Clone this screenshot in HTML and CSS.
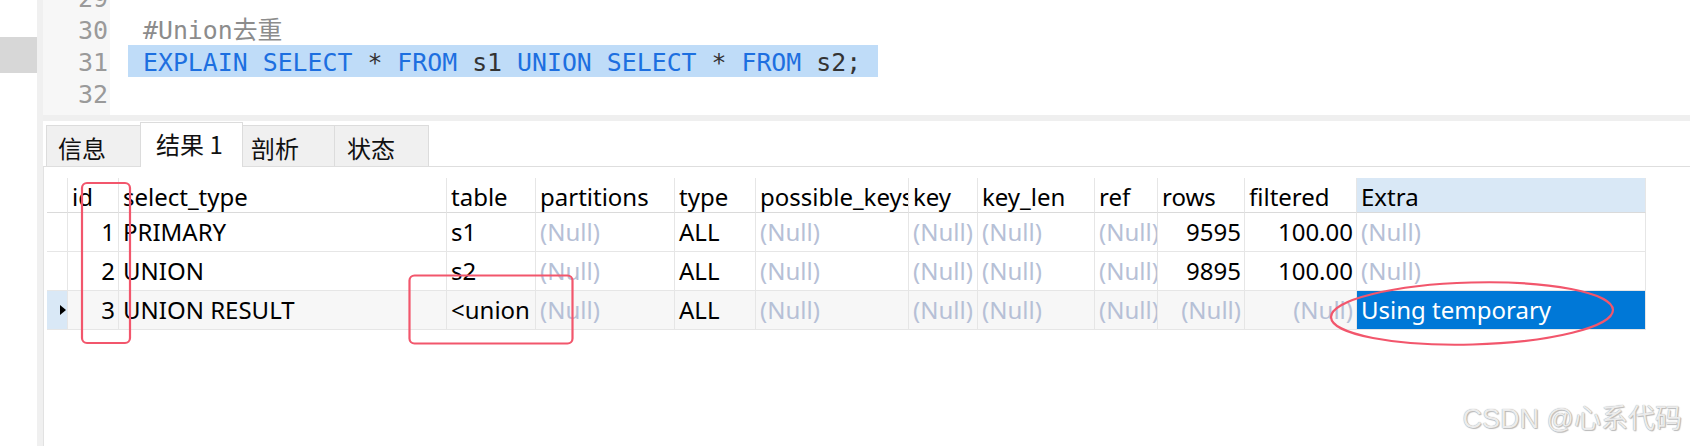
FILE: index.html
```html
<!DOCTYPE html>
<html lang="zh">
<head>
<meta charset="utf-8">
<title>EXPLAIN UNION</title>
<link rel="stylesheet" href="styles.css">
</head>
<body>
<div class="app">
  <div class="sidebar"><div class="side-item"></div></div>
  <div class="strip"></div>
  <div class="main">
    <div class="editor">
      <div class="editor-inner">
        <div class="gutter">
          <div class="ln">29</div>
          <div class="ln">30</div>
          <div class="ln">31</div>
          <div class="ln">32</div>
        </div>
        <div class="code">
          <div class="line"></div>
          <div class="line"><span class="cm">#Union去重</span></div>
          <div class="line hl"><span class="kw">EXPLAIN</span> <span class="kw">SELECT</span> <span class="op">*</span> <span class="kw">FROM</span> <span class="id">s1</span> <span class="kw">UNION</span> <span class="kw">SELECT</span> <span class="op">*</span> <span class="kw">FROM</span> <span class="id">s2;</span></div>
          <div class="line"></div>
        </div>
      </div>
    </div>
    <div class="band"></div>
    <div class="tabs">
      <div class="tab t1">信息</div>
      <div class="tab t2 active">结果 1</div>
      <div class="tab t3">剖析</div>
      <div class="tab t4">状态</div>
    </div>
    <div class="grid">
      <div class="table">
        <div class="row head">
          <div class="c rh"></div>
          <div class="c">id</div>
          <div class="c">select_type</div>
          <div class="c">table</div>
          <div class="c">partitions</div>
          <div class="c">type</div>
          <div class="c">possible_keys</div>
          <div class="c">key</div>
          <div class="c">key_len</div>
          <div class="c">ref</div>
          <div class="c">rows</div>
          <div class="c">filtered</div>
          <div class="c sel-col">Extra</div>
        </div>
        <div class="row">
          <div class="c rh"></div>
          <div class="c r">1</div>
          <div class="c">PRIMARY</div>
          <div class="c">s1</div>
          <div class="c n">(Null)</div>
          <div class="c">ALL</div>
          <div class="c n">(Null)</div>
          <div class="c n">(Null)</div>
          <div class="c n">(Null)</div>
          <div class="c n">(Null)</div>
          <div class="c r">9595</div>
          <div class="c r">100.00</div>
          <div class="c n">(Null)</div>
        </div>
        <div class="row">
          <div class="c rh"></div>
          <div class="c r">2</div>
          <div class="c">UNION</div>
          <div class="c">s2</div>
          <div class="c n">(Null)</div>
          <div class="c">ALL</div>
          <div class="c n">(Null)</div>
          <div class="c n">(Null)</div>
          <div class="c n">(Null)</div>
          <div class="c n">(Null)</div>
          <div class="c r">9895</div>
          <div class="c r">100.00</div>
          <div class="c n">(Null)</div>
        </div>
        <div class="row current">
          <div class="c rh"><span class="marker"></span></div>
          <div class="c r">3</div>
          <div class="c">UNION RESULT</div>
          <div class="c"><span class="clip">&lt;union1,2&gt;</span></div>
          <div class="c n">(Null)</div>
          <div class="c">ALL</div>
          <div class="c n">(Null)</div>
          <div class="c n">(Null)</div>
          <div class="c n">(Null)</div>
          <div class="c n">(Null)</div>
          <div class="c r n">(Null)</div>
          <div class="c r n">(Null)</div>
          <div class="c selected">Using temporary</div>
        </div>
      </div>
    </div>
  </div>
</div>
<svg class="marks" width="1690" height="446" viewBox="0 0 1690 446">
  <rect x="82" y="183" width="48" height="160" rx="5" ry="5"/>
  <rect x="409.5" y="275.5" width="163" height="68" rx="5" ry="5"/>
  <ellipse cx="1472" cy="313.5" rx="141" ry="31" transform="rotate(-1.5 1472 313.5)"/>
</svg>
<div class="watermark">CSDN @心系代码</div>
</body>
</html>
```

FILE: styles.css
```css
html, body {
  margin: 0;
  padding: 0;
}
body {
  width: 1690px;
  height: 446px;
  overflow: hidden;
  background: #ffffff;
  position: relative;
  font-family: "Noto Sans", "Noto Sans CJK SC", sans-serif;
  color: #000;
}
.app {
  display: flex;
  height: 446px;
}
.sidebar {
  width: 37px;
  background: #ffffff;
  padding-top: 37px;
  box-sizing: border-box;
}
.side-item {
  height: 36px;
  background: #d7d7d7;
}
.strip {
  width: 6px;
  background: #f0f0f0;
}
.main {
  flex: 1;
  display: flex;
  flex-direction: column;
  min-width: 0;
}
.editor {
  height: 115px;
  overflow: hidden;
  background: #ffffff;
}
.editor-inner {
  display: flex;
  margin-top: -19px;
  height: 134px;
}
.gutter {
  width: 67px;
  background: #f7f7f7;
  box-sizing: border-box;
  padding-right: 2px;
  font-family: "DejaVu Sans Mono", monospace;
  font-size: 25px;
  color: #9a9a9a;
  text-align: right;
}
.ln {
  height: 32px;
  line-height: 36px;
}
.code {
  flex: 1;
  font-family: "DejaVu Sans Mono", "Noto Sans CJK SC", monospace;
  font-size: 24.85px;
}
.line {
  height: 32px;
  line-height: 36px;
  padding-left: 33px;
  white-space: pre;
}
.line.hl {
  margin-left: 18px;
  padding-left: 15px;
  width: 750px;
  box-sizing: border-box;
  background: #bfdcf8;
}
.cm { color: #8c8c8c; }
.kw { color: #1d6fe0; }
.op { color: #333333; }
.id { color: #333333; }
.band {
  height: 6px;
  background: #efefef;
}
.tabs {
  height: 45px;
  display: flex;
  align-items: flex-end;
  padding-left: 3px;
  border-bottom: 1px solid #dedede;
  font-family: "Noto Sans CJK SC", "Noto Sans", sans-serif;
  font-size: 24px;
  color: #111;
}
.tab {
  height: 41px;
  box-sizing: border-box;
  background: #f0f0f0;
  border: 1px solid #dcdcdc;
  border-bottom: none;
  padding-left: 12px;
  line-height: 44px;
  margin-right: -1px;
}
.t1 { width: 95px; padding-left: 11px; }
.t2 { width: 103px; }
.t3 { width: 93px; padding-left: 8px; }
.t4 { width: 95px; }
.tab.active {
  height: 45px;
  background: #ffffff;
  margin-bottom: -1px;
  padding-left: 15px;
  line-height: 42px;
  position: relative;
}
.grid {
  flex: 1;
  border-left: 1px solid #e2e2e2;
  padding-top: 11px;
  padding-left: 3px;
}
.row {
  display: grid;
  grid-template-columns: 21px 51px 328px 89px 139px 81px 153px 69px 117px 63px 87px 112px 289px;
  height: 39px;
  font-size: 24px;
}
.row.head {
  height: 35px;
}
.c {
  box-sizing: border-box;
  border-right: 1px solid #e6e6e6;
  border-bottom: 1px solid #e6e6e6;
  padding: 0 4px;
  white-space: nowrap;
  overflow: hidden;
  line-height: 37px;
}
.head .c {
  padding-top: 2px;
  line-height: 34px;
  border-bottom-color: #dadada;
}
.c.r {
  text-align: right;
  padding-right: 3px;
}
.c.n { color: #b6c0d6; }
.clip {
  display: block;
  width: 80px;
  overflow: hidden;
}
.c.rh {
  padding: 0;
  position: relative;
}
.row.current .c { background: #f7f7f7; }
.row.current .c.rh { background: #d9e8f6; }
.head .c.sel-col { background: #d9e8f6; }
.row.current .c.selected {
  background: #0078d7;
  color: #ffffff;
}
.marker {
  position: absolute;
  left: 13px;
  top: 14px;
  width: 0;
  height: 0;
  border-top: 5px solid transparent;
  border-bottom: 5px solid transparent;
  border-left: 6px solid #000;
}
.marks {
  position: absolute;
  left: 0;
  top: 0;
  pointer-events: none;
}
.marks rect, .marks ellipse {
  fill: none;
  stroke: #f2566c;
  stroke-width: 2.2;
}
.watermark {
  position: absolute;
  right: 8px;
  top: 397px;
  font-family: "Liberation Sans", "Noto Sans CJK SC", sans-serif;
  font-size: 27px;
  color: #ececec;
  text-shadow: 0 0 1px #969696, 1px 1px 1px #bdbdbd;
  white-space: nowrap;
}
```
